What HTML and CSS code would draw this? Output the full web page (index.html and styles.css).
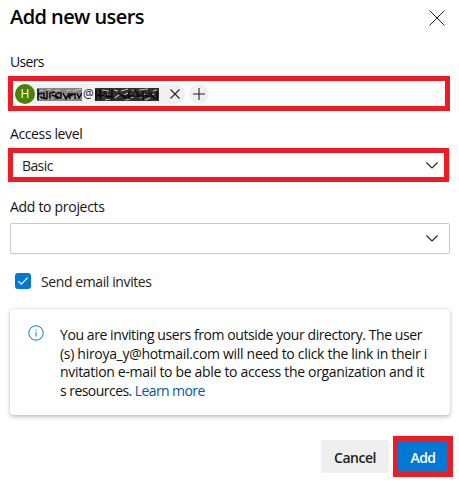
FILE: index.html
```html
<!DOCTYPE html>
<html lang="en">
<head>
<meta charset="utf-8">
<title>Add new users</title>
<link rel="stylesheet" href="styles.css">
</head>
<body>
<main class="dialog">
  <header class="header">
    <h1 class="title">Add new users</h1>
    <svg class="close" width="16" height="16" viewBox="0 0 16 16"><path d="M.5.5l15 15M15.5.5l-15 15"/></svg>
  </header>
  <div class="label users-label">Users</div>
  <div class="picker">
    <div class="pill">
      <span class="avatar">H</span>
      <svg class="mask first" width="45" height="13" viewBox="0 0 45 13">
        <rect width="45" height="13" fill="#858585"/>
        <path class="light" d="M3 2l3 1M10 2l4-1M17 3l6-1M29 3l5-1M36 3l8-2M1 11l5-2M9 11l7-1M23 11l4-2M34 11l6-3M16 6h3M30 7h4"/>
        <path class="dark" d="M1 1v11M1 6l6-1v6M10 3v8M13 11V5l5-1M20 5h4v5h-5V5M26 5l3 6 3-6M33 11V6h5v5M40 5l2 5 3-5M3 9l7 2M15 7l8 3M28 10l9-4"/>
      </svg>
      <span class="at">@</span>
      <svg class="mask" width="64" height="13" viewBox="0 0 64 13">
        <rect width="64" height="13" fill="#303030"/>
        <path class="light" d="M7 2l7 1M19 2l4 1M26 3l7-2M37 2l3 1M44 2l9-1M58 3l4-1M8 9l5-3M20 10l5-4M29 7l4-2M36 10l5-3M45 10l5-4M55 8l4-2M10 12l5-1M30 12l5-1M50 12l5-2"/>
        <path class="dark" d="M1 2v10M5 1v10M9 3l5 8M17 2v9M23 5l9 6M34 3v8M39 2l7 7M48 4v8M54 4l6 7M62 3v9M2 7l15 2M28 8h29"/>
      </svg>
      <svg class="remove" width="10" height="10" viewBox="0 0 10 10"><path d="M.5.5l9 9M9.500.5l-9 9"/></svg>
    </div>
    <span class="plus"><svg width="12" height="12" viewBox="0 0 12 12"><path d="M6 0v12M0 6h12"/></svg></span>
  </div>
  <div class="label access-label">Access level</div>
  <div class="select-shell"><div class="select marked"><span class="basic">Basic</span><svg class="chevron" width="12" height="7" viewBox="0 0 12 7"><path d="M.4.5L6 6 11.600.5"/></svg></div></div>
  <div class="label projects-label">Add to projects</div>
  <div class="select plain"><svg class="chevron" width="12" height="7" viewBox="0 0 12 7"><path d="M.4.5L6 6 11.600.5"/></svg></div>
  <div class="invite">
    <span class="check"><svg width="16" height="16" viewBox="0 0 16 16"><path d="M3.300 8.200l3 3 6.400-6.500"/></svg></span>
    <span class="invite-text">Send email invites</span>
  </div>
  <section class="card">
    <svg class="info" width="16" height="16" viewBox="0 0 16 16"><circle cx="8" cy="8" r="7.200"/><path d="M8 7v4.500M8 4.500v1.200"/></svg>
    <div class="message">
      <div class="line l1">You are inviting users from outside your directory. The user</div>
      <div class="line l2">(s) hiroya_y@hotmail.com will need to click the link in their i</div>
      <div class="line l3">nvitation e-mail to be able to access the organization and it</div>
      <div class="line l4">s resources. <a class="link">Learn more</a></div>
    </div>
  </section>
  <footer class="footer">
    <button class="button cancel">Cancel</button>
    <button class="button add">Add</button>
  </footer>
</main>
</body>
</html>
```
FILE: styles.css
```css
* { box-sizing: border-box; }
body { margin: 0; background: #fff; color: #111; font: 14px/20px "Open Sans", "Noto Sans", sans-serif; }
svg { display: block; flex: none; fill: none; stroke: #222; stroke-width: 1.1; }
.dialog { width: 459px; height: 488px; overflow: hidden; padding: 0 9px 0 10px; }
.header { display: flex; justify-content: space-between; height: 52px; padding: 3px 5px 0 0; }
.title { margin: 0; font-size: 20px; line-height: 28px; font-weight: 600; letter-spacing: -.58px; white-space: nowrap; color: #050505; }
.close { margin-top: 7px; stroke-width: 1; }
.label { height: 20px; white-space: nowrap; }
.users-label { letter-spacing: -.7px; }
.picker { display: flex; align-items: center; width: 442px; height: 35px; margin: 4px 0 0 -2px; border: 5px solid #ed1c24; padding-left: 2px; }
.pill { display: flex; align-items: center; width: 170px; height: 20px; border-radius: 10px; background: #f0f0f0; }
.avatar { width: 20px; height: 20px; border-radius: 50%; background: #498205; color: #fff; text-align: center; font-size: 12px; line-height: 20px; }
.mask { stroke: none; margin-top: 2px; }
.mask path { filter: blur(.35px); }
.first { margin-left: 2px; }
.light { stroke: #bdbdbd; stroke-width: 1.2; }
.dark { stroke: #080808; stroke-width: 1.4; }
.at { width: 13px; font-size: 12px; text-align: center; }
.remove { margin-left: 11px; }
.plus { display: flex; align-items: center; justify-content: center; width: 20px; height: 20px; margin-left: 4px; border-radius: 50%; background: #f0f0f0; }
.access-label { margin-top: 13px; letter-spacing: -.38px; }
.select-shell { width: 442px; height: 34px; margin: 4px 0 0 -2px; background: linear-gradient(#c8c8c8, #c8c8c8) right center / 1px 30px no-repeat; }
.select { display: flex; align-items: center; }
.marked { width: 441px; height: 34px; border: 5px solid #ed1c24; padding: 2px 6px 0 9px; }
.chevron { margin-left: auto; }
.marked .chevron { margin-top: -1px; }
.basic { color: #222; letter-spacing: -.6px; }
.projects-label { margin-top: 15px; letter-spacing: -.3px; }
.plain { width: 440px; height: 31px; margin-top: 6px; padding-right: 11px; border: 1px solid #c8c8c8; border-radius: 2px; }
.invite { display: flex; align-items: center; margin: 17px 0 0 5px; height: 20px; }
.check { width: 16px; height: 16px; border-radius: 3px; background: #0078d4; }
.check path { stroke: #fff; stroke-width: 1.2; }
.invite-text { margin-left: 10px; padding-top: 1px; color: #222; letter-spacing: -.4px; }
.card { display: flex; width: 440px; height: 106px; margin-top: 18px; padding: 16px 0 0 18px; border-radius: 4px; box-shadow: 0 1.600px 4px rgba(0,0,0,.25), 0 0 2px rgba(0,0,0,.08); }
.info { stroke: #0078d4; stroke-width: 1; }
.message { margin: 1px 0 0 16px; }
.line { height: 18.670px; line-height: 18.670px; white-space: nowrap; }
.l1 { letter-spacing: -.42px; }
.l2 { letter-spacing: -.3px; }
.l3 { letter-spacing: -.32px; }
.l4 { letter-spacing: -.54px; }
.link { color: #005a9e; letter-spacing: -.6px; }
.footer { display: flex; justify-content: flex-end; margin: 21px -3px 0 0; gap: 4px; }
.button { border: 0; padding: 0; font: 600 14px/20px "Open Sans", sans-serif; letter-spacing: -.5px; }
.cancel { width: 68px; height: 33px; margin-top: 4px; border-radius: 2px; background: #efefef; color: #222; padding-top: 3px; }
.add { width: 60px; height: 41px; background: #0078d4; color: #fff; border: 5px solid #ed1c24; padding-top: 3px; letter-spacing: -.6px; }
```
